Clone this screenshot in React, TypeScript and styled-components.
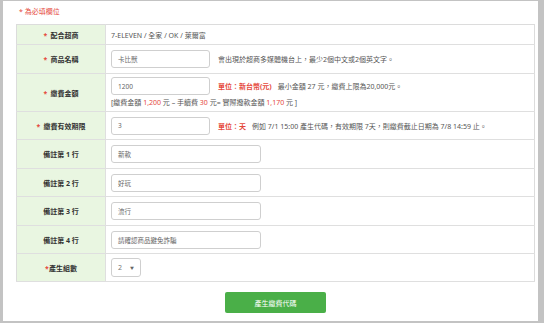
import React from 'react';
import styled, { createGlobalStyle } from 'styled-components';

const GlobalStyle = createGlobalStyle`
  html, body {
    margin: 0;
    padding: 0;
    background: #c3c3c3;
  }
  body {
    font-family: 'Noto Sans', 'Noto Sans CJK TC', sans-serif;
  }
`;

const Panel = styled.div`
  margin: 1px 6px 2px 3px;
  height: 320px;
  box-sizing: border-box;
  background: #fff;
  padding: 6px 3px 0 13px;
`;

const Required = styled.div`
  color: #e5483b;
  font-size: 7px;
  line-height: 10px;
  margin: 0 0 7px 3px;
`;

const Table = styled.table`
  width: 519px;
  border-collapse: collapse;
  border: 1px solid #dcdcdc;
`;

const Row = styled.tr<{ $h?: number }>`
  height: ${(p) => p.$h ?? 28}px;
  border-bottom: 1px solid #dfdfdf;
`;

const Label = styled.th`
  width: 88px;
  background: #e9f6e1;
  border-right: 1px solid #dfdfdf;
  color: #333;
  font-size: 7px;
  font-weight: 700;
  text-align: center;
  padding: 0;
`;

const Star = styled.span<{ $tight?: boolean }>`
  color: #e5483b;
  margin-right: ${(p) => (p.$tight ? 0 : 3)}px;
`;

const Cell = styled.td`
  padding: 0 5px;
  font-size: 7px;
  color: #555;
  vertical-align: middle;
`;

const Line = styled.div`
  display: flex;
  align-items: center;
  gap: 8px;
`;

const Input = styled.div<{ $w?: number }>`
  width: ${(p) => p.$w ?? 99}px;
  height: 18px;
  box-sizing: border-box;
  border: 1px solid #cfcfcf;
  border-radius: 3px;
  padding: 0 6px;
  display: flex;
  align-items: center;
  font-size: 6.5px;
  color: #666;
  flex-shrink: 0;
`;

const Unit = styled.span`
  color: #e5483b;
  font-weight: 700;
  margin-right: 6px;
`;

const Red = styled.span`
  color: #e5483b;
`;

const Note = styled.div`
  margin-top: 2px;
  line-height: 11px;
`;

const Select = styled.div`
  width: 30px;
  height: 19px;
  box-sizing: border-box;
  border: 1px solid #cfcfcf;
  border-radius: 3px;
  display: flex;
  align-items: center;
  justify-content: space-between;
  padding: 0 6px 0 6px;
  font-size: 7px;
  color: #777;
`;

const Caret = styled.span`
  font-size: 4px;
  color: #666;
`;

const Actions = styled.div`
  display: flex;
  justify-content: center;
  padding-top: 10px;
`;

const Button = styled.button`
  width: 101px;
  height: 21px;
  border: none;
  border-radius: 2px;
  background: #4aaf48;
  color: #fff;
  font-family: 'Noto Sans CJK TC', sans-serif;
  font-size: 7px;
  padding: 0;
`;

const memos = ['新款', '好玩', '流行', '請確認商品避免詐騙'];

export default function App() {
  return (
    <>
      <GlobalStyle />
      <Panel>
        <Required>* 為必填欄位</Required>
        <Table>
          <tbody>
            <Row $h={20}>
              <Label><Star>*</Star>配合超商</Label>
              <Cell>7-ELEVEN / 全家 / OK / 萊爾富</Cell>
            </Row>
            <Row $h={29}>
              <Label><Star>*</Star>商品名稱</Label>
              <Cell>
                <Line>
                  <Input>卡比獸</Input>
                  <span>會出現於超商多媒體機台上，最少2個中文或2個英文字。</span>
                </Line>
              </Cell>
            </Row>
            <Row $h={38}>
              <Label><Star>*</Star>繳費金額</Label>
              <Cell>
                <Line>
                  <Input>1200</Input>
                  <span>
                    <Unit>單位：新台幣(元)</Unit>最小金額 27 元，繳費上限為20,000元。
                  </span>
                </Line>
                <Note>
                  [繳費金額 <Red>1,200</Red> 元 – 手續費 <Red>30</Red> 元= 實際撥款金額 <Red>1,170</Red> 元 ]
                </Note>
              </Cell>
            </Row>
            <Row $h={28}>
              <Label><Star>*</Star>繳費有效期限</Label>
              <Cell>
                <Line>
                  <Input>3</Input>
                  <span>
                    <Unit>單位：天</Unit>例如 7/1 15:00 產生代碼，有效期限 7天，則繳費截止日期為 7/8 14:59 止。
                  </span>
                </Line>
              </Cell>
            </Row>
            {memos.map((m, i) => (
              <Row key={m} $h={i % 2 === 0 ? 29 : 28}>
                <Label>備註第 {i + 1} 行</Label>
                <Cell>
                  <Input $w={150}>{m}</Input>
                </Cell>
              </Row>
            ))}
            <Row $h={28}>
              <Label><Star $tight>*</Star>產生組數</Label>
              <Cell>
                <Select>
                  2<Caret>▼</Caret>
                </Select>
              </Cell>
            </Row>
          </tbody>
        </Table>
        <Actions>
          <Button>產生繳費代碼</Button>
        </Actions>
      </Panel>
    </>
  );
}
